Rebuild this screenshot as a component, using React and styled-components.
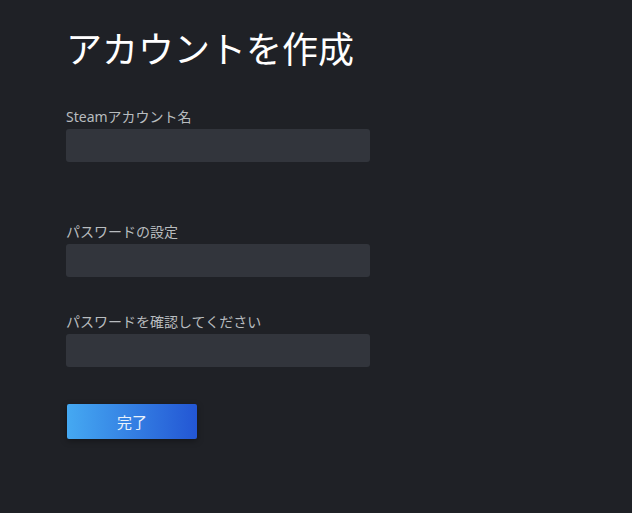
import styled, { createGlobalStyle } from "styled-components";

const GlobalStyle = createGlobalStyle`
  html, body {
    margin: 0;
    padding: 0;
    background: #1f2126;
  }
  body {
    font-family: "Noto Sans", "Noto Sans CJK JP", sans-serif;
  }
`

const Page = styled.div`
  width: 632px;
  height: 513px;
  background: #1f2126;
  box-sizing: border-box;
  padding: 22px 0 0 66px;
`

const Title = styled.h1`
  margin: 0 0 35px 0;
  font-size: 36px;
  font-weight: 400;
  line-height: 50px;
  color: #ffffff;
  font-family: "Noto Sans CJK JP", sans-serif;
`

const Field = styled.div`
  display: flex;
  flex-direction: column;
  width: 304px;
  margin-bottom: ${props => props.$gap}px;
`

const Label = styled.label`
  font-size: 14px;
  line-height: 20px;
  color: #b8bcbf;
  margin-bottom: 2px;
`

const Input = styled.input`
  height: 33px;
  box-sizing: border-box;
  border: none;
  border-radius: 3px;
  background: #32353c;
  outline: none;
  color: #fff;
  padding: 0 10px;
`

const Button = styled.button`
  margin-left: 1px;
  width: 130px;
  height: 35px;
  border: none;
  border-radius: 2px;
  background: linear-gradient(to right, #45a9f2, #2356d4);
  color: #e8f1fb;
  font-size: 15px;
  font-family: "Noto Sans CJK JP", sans-serif;
  box-shadow: 0 2px 6px rgba(0, 0, 0, 0.35);
  cursor: pointer;
`

const App = () => {
  return (
    <Page>
      <GlobalStyle />
      <Title>アカウントを作成</Title>
      <Field $gap={60}>
        <Label>Steamアカウント名</Label>
        <Input />
      </Field>
      <Field $gap={35}>
        <Label>パスワードの設定</Label>
        <Input type="password" />
      </Field>
      <Field $gap={37}>
        <Label>パスワードを確認してください</Label>
        <Input type="password" />
      </Field>
      <Button>完了</Button>
    </Page>
  )
}

export default App
